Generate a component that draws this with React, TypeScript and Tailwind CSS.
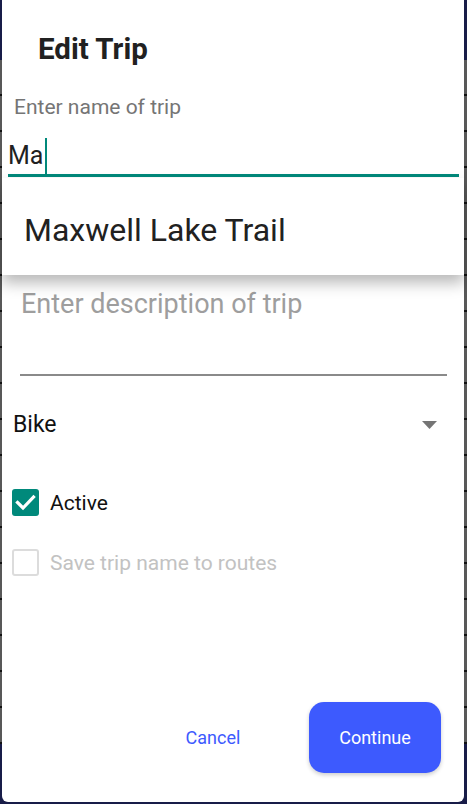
import React from "react"

const font = { fontFamily: "Roboto, 'Noto Sans', Arial, sans-serif" }

// stripes of the list that sits behind the dialog
const stripes: number[] = new Array(19).fill(0).map((_, i) => i)

const Check = () => (
    <svg width="27" height="27" viewBox="0 0 27 27">
        <rect x="0" y="0" width="27" height="27" rx="3" fill="#00897b" />
        <path d="M5.5 13.5 L11 19 L21.5 8" fill="none" stroke="#ffffff" strokeWidth="3.2" strokeLinecap="square" />
    </svg>
)

export default function App() {
    return (
        <div className="relative w-[467px] h-[804px] overflow-hidden" style={font}>
            {/* screen behind the modal */}
            <div className="absolute inset-0 flex flex-col">
                <div className="h-[60px] bg-[#181c48]" />
                <div className="flex-1 bg-[#585858] flex flex-col">
                    {stripes.map((i) => (
                        <div key={i} className="h-[36px] border-b-2 border-[#111111]" />
                    ))}
                </div>
                <div className="h-[60px] bg-[#181c48]" />
            </div>

            {/* dialog */}
            <div className="relative ml-[2px] mr-[3px] h-[802px] bg-white rounded-b-[6px] flex flex-col">
                <h1 className="pt-[33px] pl-[36px] text-[29.5px] leading-[32px] font-bold text-[#212121]">
                    Edit Trip
                </h1>

                <div className="mt-[30px] ml-[6px] mr-[5px] border-b-[3px] border-[#00897b]">
                    <div className="pl-[6px] text-[21px] leading-[24px] text-[#757575]">Enter name of trip</div>
                    <div className="mt-[23px] pb-[4px] flex items-center h-[32px] text-[25px] leading-[28px] text-[#212121]">
                        <span>Ma</span>
                        <span className="ml-[2px] my-[-4px] w-[2px] h-[36px] bg-[#00897b]" />
                    </div>
                </div>

                <div className="mt-[111px] ml-[18px] mr-[17px] border-b-2 border-[#8a8a8a] pb-[54px]">
                    <div className="pl-[1px] text-[27px] leading-[32px] text-[#9e9e9e]">Enter description of trip</div>
                </div>

                <div className="mt-[35px] ml-[11px] mr-[27px] h-[28px] flex items-center justify-between">
                    <span className="text-[23px] leading-[28px] text-[#111111]">Bike</span>
                    <svg width="15" height="8" viewBox="0 0 15 8">
                        <polygon points="0,0 15,0 7.5,8" fill="#757575" />
                    </svg>
                </div>

                <div className="mt-[50px] ml-[10px] flex items-center gap-[11px]">
                    <Check />
                    <span className="text-[21px] leading-[26px] text-[#111111]">Active</span>
                </div>

                <div className="mt-[33px] ml-[10px] flex items-center gap-[11px]">
                    <div className="w-[27px] h-[27px] rounded-[3px] border-2 border-[#dcdcdc]" />
                    <span className="text-[21px] leading-[26px] text-[#c2c2c2]">Save trip name to routes</span>
                </div>

                <div className="flex-1" />

                <div className="flex justify-end items-center gap-[30px] pr-[23px] pb-[29px]">
                    <button className="w-[132px] h-[71px] text-[18px] text-[#3d5afe]">Cancel</button>
                    <button className="w-[132px] h-[71px] rounded-[15px] bg-[#3d5afe] text-white text-[18px] shadow-[0_2px_4px_rgba(0,0,0,0.2)]">
                        Continue
                    </button>
                </div>

                {/* autocomplete suggestions */}
                <div className="absolute top-[178px] left-0 right-0 h-[97px] bg-white shadow-[0_8px_14px_rgba(0,0,0,0.28)] pt-[33px] pl-[22px]">
                    <div className="text-[32px] leading-[38px] text-[#212121]">Maxwell Lake Trail</div>
                </div>
            </div>
        </div>
    )
}
